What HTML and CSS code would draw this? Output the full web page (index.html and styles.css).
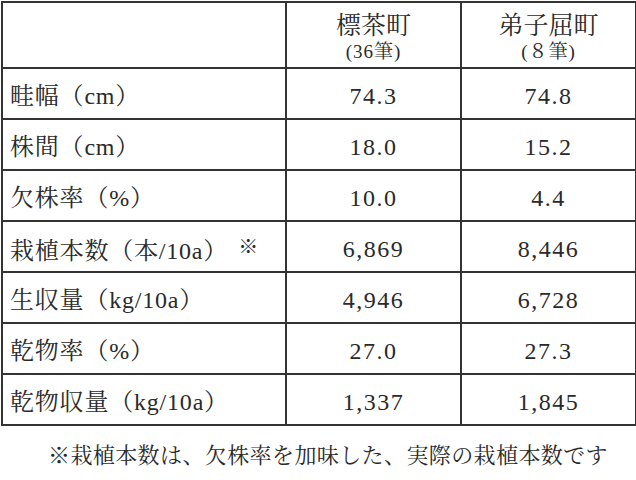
FILE: index.html
```html
<!DOCTYPE html>
<html lang="ja">
<head>
<meta charset="utf-8">
<link rel="stylesheet" href="styles.css">
</head>
<body>
<table class="data">
  <colgroup>
    <col class="c-label">
    <col class="c-val">
    <col class="c-val2">
  </colgroup>
  <thead>
    <tr class="head">
      <th></th>
      <th><div class="town">標茶町</div><div class="count">(36筆)</div></th>
      <th><div class="town">弟子屈町</div><div class="count">(８筆)</div></th>
    </tr>
  </thead>
  <tbody>
    <tr><td class="label">畦幅（cm）</td><td>74.3</td><td>74.8</td></tr>
    <tr><td class="label">株間（cm）</td><td>18.0</td><td>15.2</td></tr>
    <tr><td class="label">欠株率（%）</td><td>10.0</td><td>4.4</td></tr>
    <tr><td class="label">栽植本数（本/10a）<span class="mark">※</span></td><td>6,869</td><td>8,446</td></tr>
    <tr><td class="label">生収量（kg/10a）</td><td>4,946</td><td>6,728</td></tr>
    <tr><td class="label">乾物率（%）</td><td>27.0</td><td>27.3</td></tr>
    <tr><td class="label">乾物収量（kg/10a）</td><td>1,337</td><td>1,845</td></tr>
  </tbody>
</table>
<p class="note">※栽植本数は、欠株率を加味した、実際の栽植本数です</p>
</body>
</html>
```

FILE: styles.css
```css
html, body {
  margin: 0;
  padding: 0;
  background: #ffffff;
}
body {
  font-family: "Liberation Serif", "Noto Serif CJK JP", "Noto Sans CJK JP", serif;
  color: #2a2a2a;
}
.data {
  border-collapse: collapse;
  width: 634px;
  margin: 1px 0 0 1px;
  table-layout: fixed;
}
.c-label { width: 284px; }
.c-val { width: 175px; }
.c-val2 { width: 175px; }
.data th, .data td {
  border: 2px solid #333333;
  padding: 0;
  font-weight: normal;
  text-align: center;
  vertical-align: middle;
  box-sizing: border-box;
}
.head {
  height: 66px;
}
.head th {
  vertical-align: top;
}
.town {
  font-size: 25px;
  line-height: 28px;
  margin-top: 9px;
}
.count {
  font-size: 19px;
  line-height: 20px;
  letter-spacing: 1px;
  margin-top: 2px;
}
.data tbody tr {
  height: 51px;
}
.data tbody td {
  font-size: 24px;
  line-height: 26px;
  letter-spacing: 1.5px;
  padding-top: 4px;
}
.data tbody td.label {
  text-align: left;
  padding-left: 7px;
  letter-spacing: 0.8px;
}
.mark {
  font-size: 20px;
  margin-left: 10px;
  vertical-align: 5px;
}
.note {
  margin: 16px 0 0 48px;
  font-size: 22px;
  line-height: 28px;
  letter-spacing: 0.4px;
}
```
